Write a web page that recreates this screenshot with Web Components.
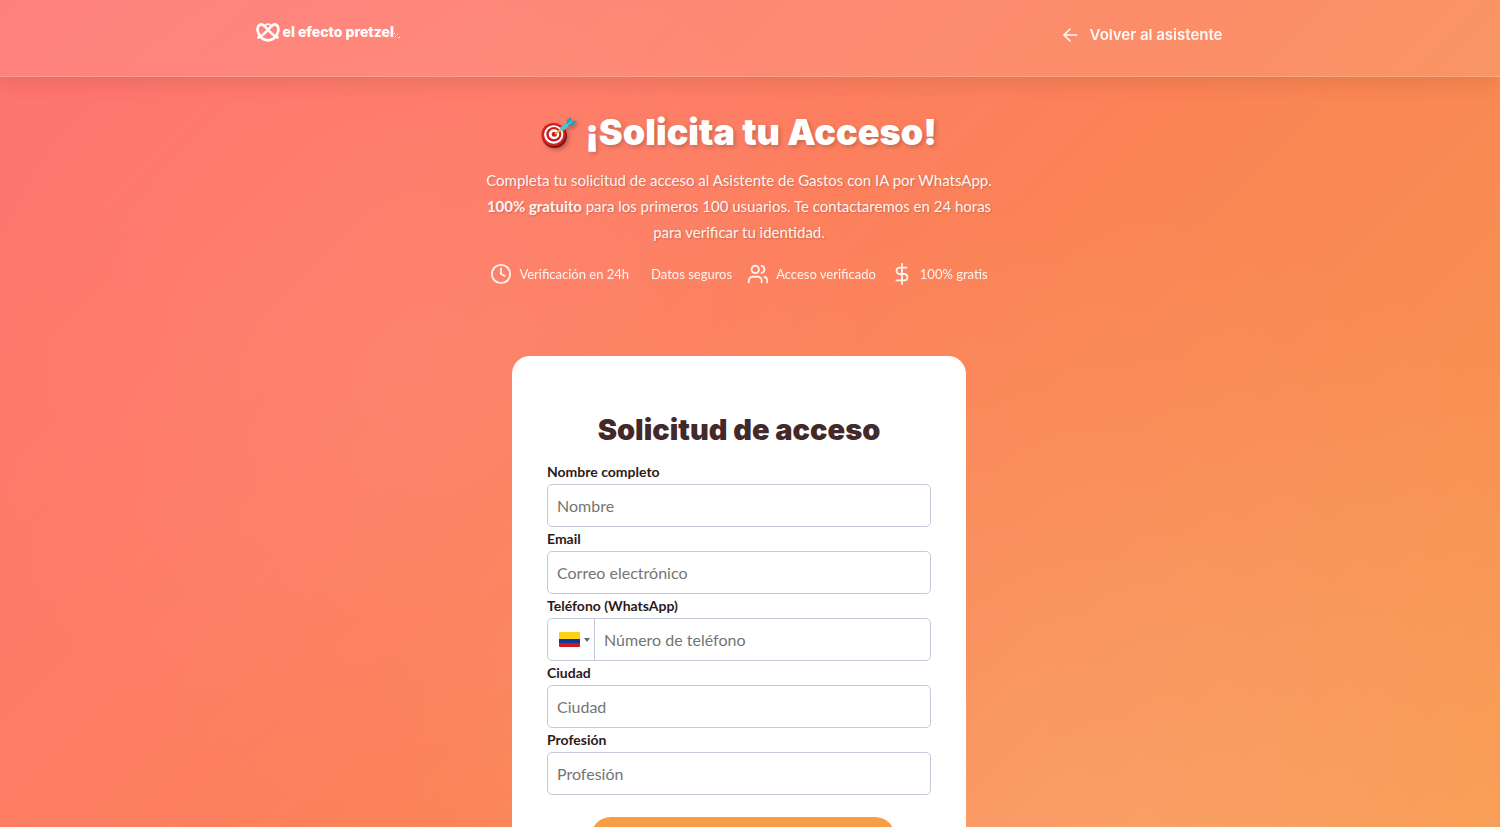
<!DOCTYPE html>
<html lang="es">
<head>
<meta charset="utf-8">
<meta name="viewport" content="width=device-width, initial-scale=1">
<title>Solicita tu Acceso</title>
<style>
  html { scrollbar-width: none; }
  body { margin: 0; font-family: Lato, sans-serif; color: #fff; }
</style>
</head>
<body>
<access-page></access-page>
<script>
const define = (name, html, extra) => {
  const template = document.createElement('template');
  template.innerHTML = html;
  customElements.define(name, class extends HTMLElement {
    constructor() {
      super();
      this.attachShadow({ mode: 'open' }).append(template.content.cloneNode(true));
      if (extra) extra(this, this.shadowRoot);
    }
  });
};

const ICONS = {
  clock: '<circle cx="12" cy="12" r="10"/><path d="M12 6v6l4 2"/>',
  users: '<path d="M16 21v-2a4 4 0 0 0-4-4H6a4 4 0 0 0-4 4v2"/><circle cx="9" cy="7" r="4"/><path d="M22 21v-2a4 4 0 0 0-3-3.87"/><path d="M16 3.13a4 4 0 0 1 0 7.75"/>',
  dollar: '<path d="M12 1v22"/><path d="M17 5H9.5a3.5 3.5 0 0 0 0 7h5a3.5 3.5 0 0 1 0 7H6"/>',
  arrow: '<path d="M21 12H4"/><path d="M12 20l-8-8 8-8"/>'
};

define('line-icon', `
<style>
  :host { display: block; flex: none; width: 22px; height: 22px; }
  svg { display: block; width: 100%; height: 100%; fill: none; stroke: currentColor; stroke-width: 2; stroke-linecap: round; stroke-linejoin: round; }
</style>
<svg viewBox="0 0 24 24" aria-hidden="true"></svg>`, (el, root) => {
  root.querySelector('svg').innerHTML = ICONS[el.getAttribute('name')];
});

define('brand-logo', `
<style>
  :host { display: block; }
  a { display: flex; align-items: center; color: #fff; text-decoration: none; font: 800 14px/20px Inter, sans-serif; }
  .mark { width: 24px; height: 20px; margin-right: 3px; }
  .dots { width: 6px; height: 6px; margin: 7px 0 0; }
</style>
<a href="#">
  <svg class="mark" viewBox="0 0 24 20" fill="none" stroke="#fff" stroke-width="2.700" stroke-linecap="round" stroke-linejoin="round" aria-hidden="true">
    <path d="M2.500 15.500C6 14 10 10.500 15 4.500C17 2.300 19 1.800 20.800 3.200C22.800 5 22.800 8.500 21.300 11.800C19.500 15.800 16.500 18.300 12 18.300C7.500 18.300 4.500 15.800 2.700 11.800C1.200 8.500 1.200 5 3.200 3.200C5 1.800 7 2.300 9 4.500C14 10.500 18 14 21.500 15.500"/>
    <path d="M9.500 3.200C11 1.800 13 1.800 14.500 3.200" stroke-width="1.500"/>
  </svg>
  <span>el efecto pretzel</span>
  <svg class="dots" viewBox="0 0 6 6" fill="#fff" fill-opacity=".8" aria-hidden="true">
    <rect x="0" y="0" width="1" height="1"/><rect x="3" y="1" width="1" height="1"/><rect x="1" y="3" width="1" height="1"/><rect x="4" y="4" width="2" height="1"/>
  </svg>
</a>`);

define('site-header', `
<style>
  :host { display: block; padding-right: 22px; background: rgba(255,255,255,.1); border-bottom: 1px solid rgba(255,255,255,.2); box-shadow: 0 4px 20px rgba(90,40,20,.15); }
  header { display: flex; justify-content: space-between; align-items: flex-start; box-sizing: border-box; width: 100%; max-width: 967px; min-height: 76px; margin: 0 auto; padding-top: 22px; }
  .back { display: flex; align-items: center; gap: 11px; color: #fff; opacity: .95; text-decoration: none; font: 600 15px/26px Inter, sans-serif; }
  line-icon { width: 18px; height: 18px; }
</style>
<header>
  <brand-logo></brand-logo>
  <a class="back" href="#"><line-icon name="arrow"></line-icon><span>Volver al asistente</span></a>
</header>`);

define('target-emoji', `
<style>
  :host { display: block; flex: none; width: 36px; height: 32px; filter: drop-shadow(2px 2px 2px rgba(0,0,0,.25)); }
  svg { display: block; width: 100%; height: 100%; }
</style>
<svg viewBox="0 0 36 32" aria-hidden="true">
  <ellipse cx="13.500" cy="20" rx="12.500" ry="12" fill="#7d1416"/>
  <ellipse cx="12.500" cy="18.500" rx="12" ry="11.500" fill="#d32020"/>
  <ellipse cx="12.700" cy="18.500" rx="9.600" ry="9.300" fill="#fff"/>
  <ellipse cx="12.800" cy="18.300" rx="7.500" ry="7.200" fill="#c91f22"/>
  <ellipse cx="13" cy="18.200" rx="5.200" ry="5" fill="#fff"/>
  <ellipse cx="13.300" cy="18.200" rx="2.600" ry="2.500" fill="#c91f22"/>
  <path d="M14 18L20 13.500" stroke="#f3b51d" stroke-width="2"/>
  <path d="M19 11.500l7-5 2.500 3-6.500 5.500c-2 0-3-1.500-3-3.500z" fill="#4cc3d9"/>
  <path d="M25.500 7.500l.5-4 4-2.500v4.500l6-1-3 4.500-5 1.500z" fill="#2b9eb8"/>
  <path d="M26.500 8.500l4-3" stroke="#7fe0ee" stroke-width="1"/>
</svg>`);

define('feature-item', `
<style>
  :host { display: flex; align-items: center; gap: 7px; font-size: 13px; line-height: 22px; opacity: .9; }
</style>
<slot name="icon"></slot><span><slot></slot></span>`);

define('page-hero', `
<style>
  :host { display: flex; flex-direction: column; align-items: center; text-align: center; }
  h1 { display: flex; align-items: center; gap: 8px; margin: 0; font: 900 36px/44px Inter, sans-serif; text-shadow: 2px 2px 4px rgba(0,0,0,.2); }
  p { max-width: 530px; margin: 13px 0 0; font-size: 15px; line-height: 26px; color: rgba(255,255,255,.95); text-shadow: 1px 1px 2px rgba(0,0,0,.2); }
  .features { display: flex; flex-wrap: wrap; justify-content: center; gap: 15px; margin-top: 18px; }
</style>
<h1><target-emoji></target-emoji><span>¡Solicita tu Acceso!</span></h1>
<p>Completa tu solicitud de acceso al Asistente de Gastos con IA por WhatsApp. <strong>100% gratuito</strong> para los primeros 100 usuarios. Te contactaremos en 24 horas para verificar tu identidad.</p>
<div class="features">
  <feature-item><line-icon slot="icon" name="clock"></line-icon>Verificación en 24h</feature-item>
  <feature-item><i slot="icon"></i>Datos seguros</feature-item>
  <feature-item><line-icon slot="icon" name="users"></line-icon>Acceso verificado</feature-item>
  <feature-item><line-icon slot="icon" name="dollar"></line-icon>100% gratis</feature-item>
</div>`);

define('form-field', `
<style>
  :host { display: block; }
  label { display: block; font-size: 14px; line-height: 24px; font-weight: 700; color: #2d1a1a; }
  .box { display: flex; box-sizing: border-box; height: 43px; border: 1px solid #c3cad9; border-radius: 5px; background: #fff; overflow: hidden; }
  .box:focus-within { border-color: #f79d45; }
  input { flex: 1; min-width: 0; padding: 0 9px; border: 0; outline: 0; background: none; font: 16px Lato, sans-serif; color: #2d1a1a; }
  input::placeholder { color: #757575; opacity: 1; }
</style>
<label for="field"></label>
<div class="box"><slot name="prefix"></slot><input id="field"></div>`, (el, root) => {
  root.querySelector('label').textContent = el.getAttribute('label');
  const input = root.querySelector('input');
  input.placeholder = el.getAttribute('placeholder');
  input.type = el.getAttribute('type') || 'text';
});

define('country-picker', `
<style>
  :host { display: block; flex: none; width: 46px; border-right: 1px solid #c3cad9; }
  button { display: flex; align-items: center; gap: 4px; width: 100%; height: 100%; padding: 0 0 0 11px; border: 0; background: none; cursor: pointer; }
  svg { display: block; }
</style>
<button type="button" aria-label="Colombia">
  <svg width="21" height="15" viewBox="0 0 21 15" aria-hidden="true">
    <clipPath id="flag"><rect width="21" height="15" rx="1"/></clipPath>
    <g clip-path="url(#flag)"><rect width="21" height="8" fill="#fcd116"/><rect y="7" width="21" height="5" fill="#12359a"/><rect y="11" width="21" height="4" fill="#ce1722"/></g>
  </svg>
  <svg width="6" height="4" viewBox="0 0 6 4" aria-hidden="true"><path d="M0 0h6L3 4z" fill="#666"/></svg>
</button>`);

define('access-form', `
<style>
  :host { display: block; box-sizing: border-box; width: 100%; max-width: 454px; padding: 52px 35px; border-radius: 18px; background: #fff; }
  h2 { margin: 0 0 8px; text-align: center; font: 900 29px/44px Inter, sans-serif; color: #432929; }
  .actions { display: flex; padding: 22px 36px 0 44px; }
  .submit { flex: 1; height: 50px; border: 0; border-radius: 20px; background: #f79d45; cursor: pointer; }
</style>
<form>
  <h2>Solicitud de acceso</h2>
  <form-field label="Nombre completo" placeholder="Nombre"></form-field>
  <form-field label="Email" placeholder="Correo electrónico" type="email"></form-field>
  <form-field label="Teléfono (WhatsApp)" placeholder="Número de teléfono" type="tel"><country-picker slot="prefix"></country-picker></form-field>
  <form-field label="Ciudad" placeholder="Ciudad"></form-field>
  <form-field label="Profesión" placeholder="Profesión"></form-field>
  <div class="actions"><button class="submit" type="submit" aria-label="Enviar solicitud"></button></div>
</form>`);

define('access-page', `
<style>
  :host { display: block; min-height: 100vh;
    background:
      radial-gradient(circle at 28% 45%, rgba(255,255,255,.06), transparent 40%),
      radial-gradient(circle at 72% 110%, rgba(255,255,255,.14), transparent 50%),
      linear-gradient(135deg, #ff7371 0%, #fd7d63 36%, #fb8356 55%, #f98a52 70%, #f89a4e 100%);
    background-size: 100% 100vh; background-attachment: fixed; }
  main { display: flex; flex-direction: column; align-items: center; gap: 71px; padding: 33px 22px 70px 0; }
</style>
<site-header></site-header>
<main>
  <page-hero></page-hero>
  <access-form></access-form>
</main>`);
</script>
</body>
</html>
